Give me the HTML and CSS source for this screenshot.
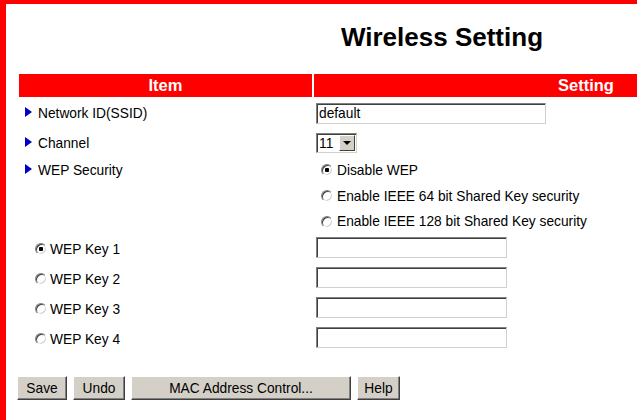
FILE: index.html
```html
<!DOCTYPE html>
<html lang="en">
    <head>
        <meta charset="UTF-8" />
        <title>Wireless Setting</title>
        <link rel="stylesheet" href="styles.css">
    </head>
    <body>
        <div class="page">
            <h1 class="title">Wireless Setting</h1>
            <form class="settings">
                <div class="grid">
                    <div class="head">Item</div>
                    <div class="head">Setting</div>

                    <div class="item"><span class="arrow"></span>Network ID(SSID)</div>
                    <div class="value"><input type="text" class="field ssid" value="default" /></div>

                    <div class="item"><span class="arrow"></span>Channel</div>
                    <div class="value">
                        <span class="select">
                            <select>
                                <option>1</option>
                                <option>6</option>
                                <option selected>11</option>
                            </select>
                            <span class="drop"><span class="caret"></span></span>
                        </span>
                    </div>

                    <div class="item"><span class="arrow"></span>WEP Security</div>
                    <div class="value"><label><input type="radio" name="wep" checked />Disable WEP</label></div>

                    <div class="item"></div>
                    <div class="value"><label><input type="radio" name="wep" />Enable IEEE 64 bit Shared Key security</label></div>

                    <div class="item"></div>
                    <div class="value"><label><input type="radio" name="wep" />Enable IEEE 128 bit Shared Key security</label></div>

                    <div class="item key"><label><input type="radio" name="key" checked />WEP Key 1</label></div>
                    <div class="value"><input type="text" class="field key-field" /></div>

                    <div class="item key"><label><input type="radio" name="key" />WEP Key 2</label></div>
                    <div class="value"><input type="text" class="field key-field" /></div>

                    <div class="item key"><label><input type="radio" name="key" />WEP Key 3</label></div>
                    <div class="value"><input type="text" class="field key-field" /></div>

                    <div class="item key"><label><input type="radio" name="key" />WEP Key 4</label></div>
                    <div class="value"><input type="text" class="field key-field" /></div>
                </div>

                <div class="actions">
                    <button type="submit" class="btn save">Save</button>
                    <button type="reset" class="btn undo">Undo</button>
                    <button type="button" class="btn mac">MAC Address Control...</button>
                    <button type="button" class="btn help">Help</button>
                </div>
            </form>
        </div>
    </body>
</html>
```

FILE: styles.css
```css
html {
    overflow: hidden;
}
body {
    margin: 0;
    height: 100vh;
    box-sizing: border-box;
    overflow: hidden;
    border-top: 4px solid #ff0000;
    border-left: 6px solid #ff0000;
    background-color: #fff;
    color: #000;
    font-family: "Liberation Sans", Arial, sans-serif;
    font-size: 13.75px;
}
.page {
    padding-left: 11px;
    width: 860px;
}
.title {
    width: 841px;
    box-sizing: border-box;
    margin: 18px 0 22px;
    padding-left: 9px;
    text-align: center;
    font-size: 26px;
    line-height: 30px;
    font-weight: bold;
}
.grid {
    display: grid;
    margin-left: 2px;
    grid-template-columns: 293px 544px;
    grid-template-rows: 23px 32px 28px 26px 26px 25px 30px 30px 30px 30px;
    column-gap: 2px;
}
.head {
    background-color: #ff0000;
    color: #fff;
    font-size: 16.5px;
    font-weight: bold;
    text-align: center;
    line-height: 23px;
}
.item {
    display: flex;
    align-items: center;
    padding-left: 6px;
}
.item.key {
    padding-left: 16px;
}
.arrow {
    width: 0;
    height: 0;
    border-left: 7px solid #0000c8;
    border-top: 5px solid transparent;
    border-bottom: 5px solid transparent;
    margin-right: 6px;
    margin-top: -3px;
}
.value {
    display: flex;
    align-items: center;
    padding-left: 2px;
}
label {
    display: flex;
    align-items: center;
}
input[type="radio"] {
    appearance: none;
    -webkit-appearance: none;
    width: 12px;
    height: 12px;
    margin: 0 3px 0 0;
    border-radius: 50%;
    border: 1px solid;
    border-color: #808080 #fff #fff #808080;
    box-shadow: inset 1px 1px 0 #404040, inset -1px -1px 0 #d4d0c8;
    background-color: #fff;
    box-sizing: border-box;
}
input[type="radio"]:checked {
    background: radial-gradient(circle, #000 0 2px, #fff 2.5px);
}
.value input[type="radio"] {
    margin-left: 5px;
    margin-right: 4px;
}
.field {
    height: 21px;
    box-sizing: border-box;
    margin: 0;
    padding: 0 2px;
    border: 1px solid;
    border-color: #808080 #d4d0c8 #d4d0c8 #808080;
    box-shadow: inset 1px 1px 0 #404040;
    font-family: inherit;
    font-size: 13.75px;
    outline: none;
}
.ssid {
    width: 230px;
}
.key-field {
    width: 191px;
    margin-top: -3px;
}
.select {
    display: flex;
    width: 41px;
    height: 20px;
    box-sizing: border-box;
    border: 1px solid;
    border-color: #808080 #d4d0c8 #d4d0c8 #808080;
    box-shadow: inset 1px 1px 0 #404040;
    padding: 1px;
    background-color: #fff;
}
.select select {
    appearance: none;
    -webkit-appearance: none;
    flex: 1;
    min-width: 0;
    border: none;
    background: transparent;
    padding: 0 0 0 1px;
    font-family: inherit;
    font-size: 13.75px;
    outline: none;
}
.drop {
    display: flex;
    align-items: center;
    justify-content: center;
    width: 16px;
    box-sizing: border-box;
    background-color: #d4d0c8;
    border: 1px solid;
    border-color: #fff #404040 #404040 #fff;
}
.caret {
    width: 0;
    height: 0;
    border-top: 4px solid #000;
    border-left: 4px solid transparent;
    border-right: 4px solid transparent;
}
.actions {
    display: flex;
    gap: 6px;
    margin-top: 22px;
}
.btn {
    height: 24px;
    padding: 0;
    background-color: #d4d0c8;
    border: 1px solid;
    border-color: #fff #404040 #404040 #fff;
    box-shadow: inset -1px -1px 0 #808080;
    color: #000;
    font-family: inherit;
    font-size: 13.75px;
    cursor: pointer;
}
.save {
    width: 50px;
}
.undo {
    width: 52px;
}
.mac {
    width: 220px;
}
.help {
    width: 43px;
}
```
